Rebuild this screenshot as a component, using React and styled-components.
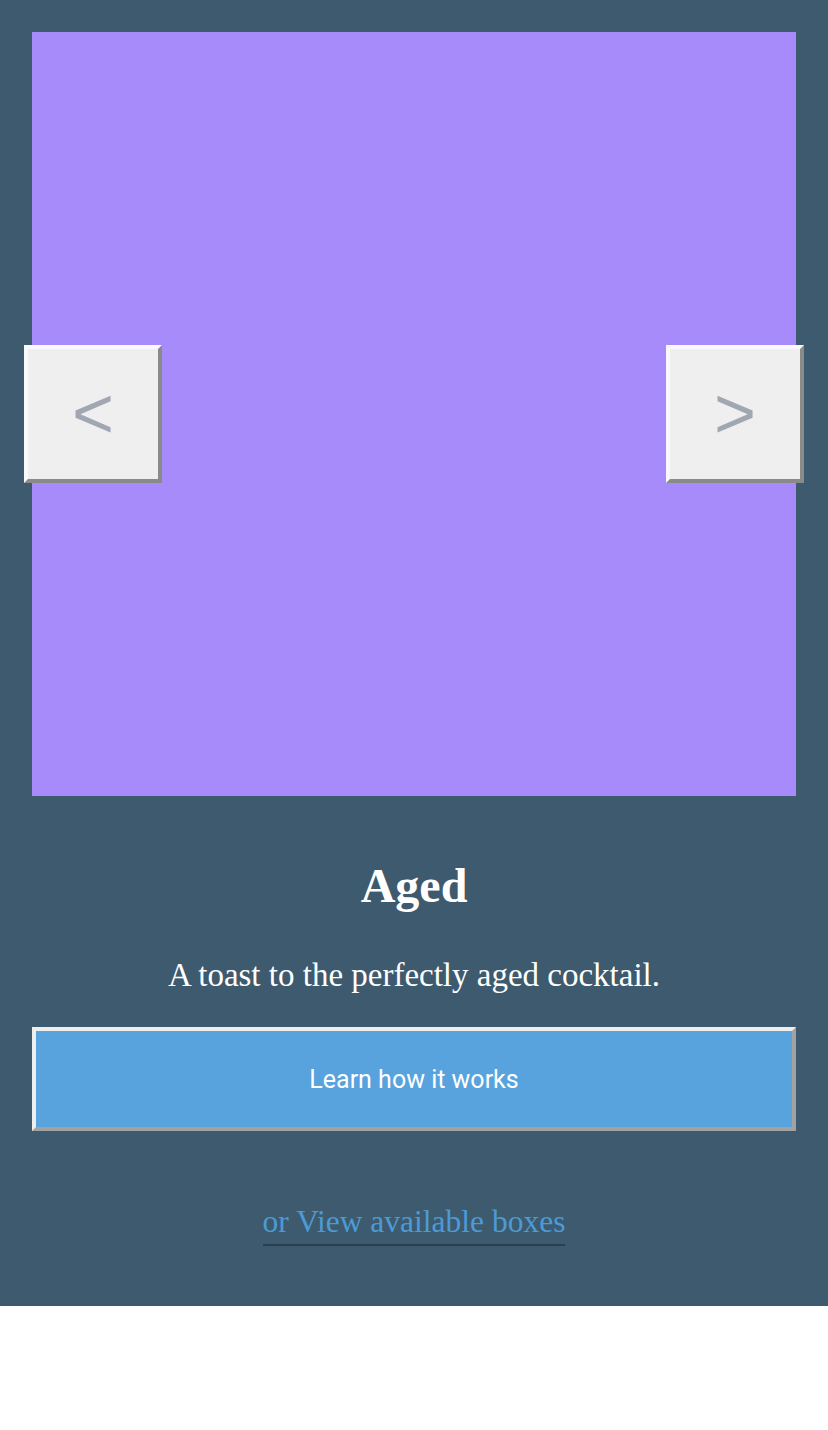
import React, { useState } from "react";
import styled, { createGlobalStyle } from "styled-components";

const slides = [
  {
    title: "Aged",
    text: "A toast to the perfectly aged cocktail.",
    color: "#a78bfa",
  },
];

function App() {
  const [index, setIndex] = useState(0);
  const slide = slides[index];

  const step = (d) => setIndex((i) => (i + d + slides.length) % slides.length);

  return (
    <>
      <GlobalStyle />
      <Hero>
        <Slider>
          <Slide $color={slide.color} />
          <Arrow $side="left" onClick={() => step(-1)}>
            &lt;
          </Arrow>
          <Arrow $side="right" onClick={() => step(1)}>
            &gt;
          </Arrow>
        </Slider>
        <Title>{slide.title}</Title>
        <Tagline>{slide.text}</Tagline>
        <Cta>Learn how it works</Cta>
        <LinkRow>
          <BoxesLink href="#">or View available boxes</BoxesLink>
        </LinkRow>
      </Hero>
    </>
  );
}

export default App;

const GlobalStyle = createGlobalStyle`
  body {
    margin: 0;
    background: #ffffff;
    font-family: "Liberation Serif", "Times New Roman", serif;
  }
`;

const Hero = styled.section`
  background: #3d5a6e;
  padding: 32px 32px 60px;
  display: flex;
  flex-direction: column;
  align-items: stretch;
`;

const Slider = styled.div`
  position: relative;
  width: 100%;
  aspect-ratio: 1 / 1;
`;

const Slide = styled.div`
  width: 100%;
  height: 100%;
  background: ${(p) => p.$color};
`;

const Arrow = styled.button`
  position: absolute;
  top: 50%;
  ${(p) => (p.$side === "left" ? "left: -8px;" : "right: -8px;")}
  transform: translateY(-50%);
  width: 138px;
  height: 138px;
  box-sizing: border-box;
  border: 4px solid;
  border-color: #f7f9fb #8a8a8a #8a8a8a #f7f9fb;
  background: #efefef;
  color: #a0a6b2;
  font-family: "Liberation Sans", Arial, sans-serif;
  font-size: 72px;
  line-height: 1;
  padding: 0 0 2px;
  cursor: pointer;
`;

const Title = styled.h1`
  margin: 61px 0 0;
  text-align: center;
  color: #ffffff;
  font-size: 48px;
  font-weight: bold;
  line-height: 1.2;
`;

const Tagline = styled.p`
  margin: 41px 0 0;
  text-align: center;
  color: #ffffff;
  font-size: 33px;
  line-height: 1.2;
`;

const Cta = styled.button`
  margin-top: 32px;
  height: 104px;
  box-sizing: border-box;
  border: 4px solid;
  border-color: #eeeeee #a2a2a2 #a2a2a2 #eeeeee;
  background: #58a3de;
  color: #ffffff;
  font-family: Roboto, "Liberation Sans", Arial, sans-serif;
  font-size: 25px;
  cursor: pointer;
`;

const LinkRow = styled.div`
  margin-top: 72px;
  text-align: center;
`;

const BoxesLink = styled.a`
  display: inline-block;
  color: #4c9ad6;
  font-size: 31.5px;
  line-height: 1.2;
  text-decoration: none;
  padding-bottom: 3px;
  border-bottom: 2px solid #2a3e4e;
`;
